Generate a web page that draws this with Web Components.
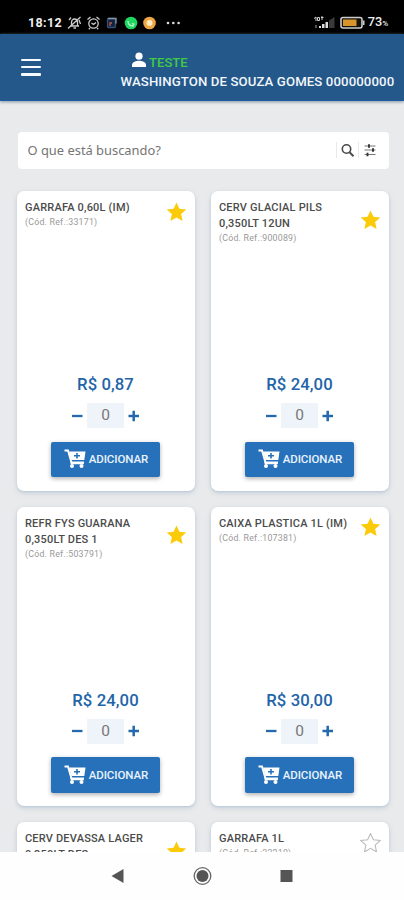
<!DOCTYPE html>
<html lang="pt-BR">
<head>
<meta charset="utf-8">
<title>Catálogo</title>
<style>
html,body{margin:0;height:100%;overflow:hidden;background:#e9eaeb;font-family:Roboto,"Liberation Sans",sans-serif}
</style>
</head>
<body>
<store-app></store-app>
<script>
const define = (name, html) => customElements.define(name, class extends HTMLElement {
  connectedCallback() {
    if (this.shadowRoot) return;
    const root = this.attachShadow({ mode: 'open' });
    root.innerHTML = typeof html === 'function' ? html(this) : html;
  }
});

define('status-bar', `
<style>
:host{display:flex;height:34px;box-sizing:border-box;background:#000;color:#eee;align-items:center;padding:11px 16px 0 28px;font:700 13px/22px Roboto,sans-serif}
.time{width:34px;font-size:12.5px;letter-spacing:.35px;white-space:nowrap}
svg{display:block;flex:none}
.icons{display:flex;align-items:center;margin-left:5px}
.right{display:flex;align-items:center;margin-left:auto}
.pct{font-size:12.8px;font-weight:500;margin-left:2px;letter-spacing:-.1px}
.pct small{font-size:8px}
</style>
<span class="time">18:12</span>
<div class="icons">
<svg width="116" height="16" viewBox="0 0 116 16" fill="none" stroke="#ccc" stroke-width="1.3">
 <path d="M3 11h9M4.500 10.500V7a3 3 0 0 1 6 0v3.500M6.500 13h2.500M1 13.500L13.500 2M2 5l2-2.500M12 5l1.500 4"/>
 <circle cx="26.500" cy="8.500" r="4.700"/><path d="M20.500 4.500l3-2.500M29.500 2l3 2.500M24.500 8l2 1.500 2.500-2M23 13l-1.200 1.200M30 13l1.200 1.200"/>
 <rect x="40.500" y="3.500" width="8" height="9" rx="1" fill="#16213a" stroke="#34527e"/><path d="M41 3.500h8v5" stroke="#8199ad"/><path d="M43 11V8h2" stroke="#b85c4f"/>
 <circle cx="64" cy="8" r="6.300" fill="#1fd660" stroke="none"/><path d="M61 6c0 3 2 5 5 5l.8-1.800-1.800-.7" stroke="#baf5cc"/>
 <circle cx="82.500" cy="8" r="6.300" fill="#eda643" stroke="none"/><circle cx="82.500" cy="8" r="3" fill="#ffe9bf" stroke="none"/>
 <g fill="#ddd" stroke="none"><circle cx="101" cy="8" r="1.300"/><circle cx="106.300" cy="8" r="1.300"/><circle cx="111.600" cy="8" r="1.300"/></g>
</svg></div>
<div class="right">
<svg width="53" height="14" viewBox="0 0 53 14">
 <path d="M1 2.500l2-1.500v4M4.500 1.500h2v3h-2zM8 1.500h2.500M9 0v4" stroke="#ccc" fill="none"/>
 <path d="M2 9h2v3H2z" fill="#555"/><path d="M6 12V10h2v2zM9 12V8h2.500v4zM12.500 12V6H15v6z" fill="#ddd"/><path d="M16 12V4.500L21.500 1v11z" fill="#3a3a3a"/>
 <rect x="28" y="1.500" width="21" height="10.500" rx="2" fill="#15120c" stroke="#ccc" stroke-width="1.600"/><rect x="30" y="3.500" width="13.500" height="6.500" fill="#d9952b"/><path d="M50 4.500h1.500v4.500H50" fill="#ccc"/>
</svg>
<span class="pct">73<small>%</small></span></div>`);

define('app-header', `
<style>
:host{display:grid;grid-template-columns:120.500px 1fr;height:67px;box-sizing:border-box;background:#24588a;color:#f1f6fb;border-bottom:1px solid #1c5d9f;box-shadow:0 1px 3px #8595a5;position:relative}
.menu{display:flex;flex-direction:column;gap:5px;padding:24.800px 0 0 20.500px}
.menu i{width:20px;height:2.300px;border-radius:1px;background:#f7fbff}
.user{padding-top:19px}
.name{display:flex;height:19px;align-items:center;padding-left:10.500px;gap:2px;color:#3fca45;font:500 13.200px/19px Roboto,sans-serif;letter-spacing:-.05px}
.name svg{margin-top:-5px}
.full{font:500 13.200px/20px Roboto,sans-serif;white-space:nowrap;letter-spacing:.11px}
</style>
<div class="menu"><i></i><i></i><i></i></div>
<div class="user"><div class="name"><svg width="16" height="16" viewBox="0 0 16 16" fill="#fff"><circle cx="8" cy="4.200" r="3.600"/><path d="M1 15v-2c0-3 4.500-4.200 7-4.200s7 1.200 7 4.200v2z"/></svg><span>TESTE</span></div>
<div class="full">WASHINGTON DE SOUZA GOMES 000000000</div></div>`);

define('search-box', `
<style>
:host{display:flex;align-items:center;height:37px;background:#fff;border-radius:4px;box-sizing:border-box;padding:0 11px 0 10px;color:#757575;font:400 12.900px/18px "Noto Sans",sans-serif}
span{flex:1;white-space:nowrap;margin-top:-1px}
svg{margin-top:-1px}
</style>
<span>O que está buscando?</span>
<svg width="42" height="20" viewBox="0 0 42 20" fill="none" stroke="#4a4a4a">
<path d="M.5 2v16M22.500 2v16" stroke="#e9e9e9"/><circle cx="10.500" cy="9" r="4.200" stroke-width="1.600"/><path d="M13.500 12.200l4 4" stroke-width="2"/>
<path d="M28.500 6H39.500M28.500 10H39.500M28.500 14.500H39.500" stroke-width="1.200" stroke="#777"/><path d="M33 4.200v3.600M37 8.200v3.600M31.500 12.700v3.600" stroke="#333" stroke-width="1.900"/></svg>`);

define('fav-star', el => `
<style>:host{display:block;width:21px;height:20px}svg{display:block}</style>
<svg width="21" height="20" viewBox="0 0 21 20"><path d="M10.500 .5l2.900 6.300 6.900.7-5.200 4.600 1.500 6.900-6.100-3.600-6.100 3.600 1.500-6.900-5.200-4.600 6.900-.7z" ${el.hasAttribute('off') ? 'fill="#fff" stroke="#bbb" stroke-width="1.100"' : 'fill="#fbcb09"'}/></svg>`);

define('qty-stepper', `
<style>
:host{display:flex;justify-content:center;align-items:center;height:25px;gap:4px;margin-left:-1px}
svg{display:block}
b{width:36.500px;height:25px;background:#eff3fa;text-align:center;font:400 15.500px/25px Roboto,sans-serif;color:#777}
</style>
<svg width="11" height="12" viewBox="0 0 11 12"><path d="M0 6h10.500" stroke="#2468ad" stroke-width="2.300"/></svg><b>0</b>
<svg width="11" height="12" viewBox="0 0 11 12"><path d="M.5 6h10.500M5.700 .7v10.600" stroke="#2468ad" stroke-width="2.500"/></svg>`);

define('add-button', `
<style>
:host{display:flex;align-items:center;width:109px;height:35.500px;box-sizing:border-box;padding-left:12.500px;gap:3px;margin-left:-.5px;background:#2671b9;border-radius:2px;box-shadow:0 2px 4px #0003,0 1px 5px #0002;color:#eaf3fc;font:500 11.500px/16px Roboto,sans-serif}
span{white-space:nowrap;letter-spacing:-.1px}
</style>
<svg width="22" height="20" viewBox="0 0 22 20"><path d="M.5 1.500h3.500l3.700 12.700h12" fill="none" stroke="#fff" stroke-width="1.900"/><path d="M5 2.500h16.500l-1.200 8.500H7.500z" fill="#fff"/><path d="M6.500 13.500h13.500" stroke="#fff" stroke-width="2"/><circle cx="8" cy="17" r="2" fill="#fff"/><circle cx="17.500" cy="17" r="2" fill="#fff"/><path d="M10 6.700h6M13 3.900v5.600" stroke="#2671b9" stroke-width="1.600"/></svg>
<span>ADICIONAR</span>`);

define('product-card', el => `
<style>
:host{display:flex;flex-direction:column;height:299.500px;box-sizing:border-box;background:#fff;border-radius:7px;box-shadow:0 2px 5px #9db4c977,0 1px 2px #9db4c955;padding:9px 8px 13.500px}
.head{display:flex;justify-content:space-between;align-items:center}
.title{font:500 11px/16px Roboto,sans-serif;color:#4b4b4b;letter-spacing:.19px;white-space:pre}
.ref{font:400 8.800px/12px Roboto,sans-serif;color:#999;white-space:nowrap;letter-spacing:.22px}
fav-star{margin-top:-5px}
.buy{margin-top:auto;display:flex;flex-direction:column;align-items:center}
.price{font:500 16.700px/20px Roboto,sans-serif;color:#2264a8;margin:0 0 8px -1px;letter-spacing:.08px}
add-button{margin-top:13.500px}
</style>
<div class="head"><div><div class="title"><slot></slot></div>${el.hasAttribute('code') ? `<div class="ref">(Cód. Ref.:${el.getAttribute('code')})</div>` : ''}</div><fav-star ${el.hasAttribute('off') ? 'off' : ''}></fav-star></div>
${el.hasAttribute('price') ? `<div class="buy"><div class="price">${el.getAttribute('price')}</div><qty-stepper></qty-stepper><add-button></add-button></div>` : ''}`);

define('nav-bar', `
<style>
:host{display:flex;align-items:center;justify-content:center;height:48px;background:#fefefe;position:relative}
svg{display:block}
</style>
<svg width="184" height="22" viewBox="0 0 184 22"><path d="M1.500 11l12-7v14z" fill="#555"/><circle cx="92.500" cy="11" r="8.300" fill="none" stroke="#666" stroke-width="1.300"/><circle cx="92.500" cy="11" r="6" fill="#555"/><path d="M170.500 5h12v12h-12z" fill="#555"/></svg>`);

define('store-app', `
<style>
:host{display:flex;flex-direction:column;width:404px;height:900px;background:#e9eaeb;overflow:hidden}
main{flex:1;min-height:0;overflow:hidden;padding:31px 15.500px 0 17.500px}
.grid{display:grid;grid-template-columns:178px 178px;gap:16px;margin:22px 0 0 -.5px}
.grid .peek{padding-bottom:0;height:60px}
.grid .two{padding-bottom:0}
status-bar,app-header,nav-bar{flex:none}
</style>
<status-bar></status-bar><app-header></app-header>
<main><search-box></search-box>
<div class="grid">
<product-card code="33171" price="R$ 0,87">GARRAFA 0,60L (IM)</product-card>
<product-card code="900089" price="R$ 24,00">CERV GLACIAL PILS<br>0,350LT 12UN</product-card>
<product-card code="503791" price="R$ 24,00">REFR FYS GUARANA<br>0,350LT DES 1</product-card>
<product-card code="107381" price="R$ 30,00">CAIXA PLASTICA 1L (IM)</product-card>
<product-card class="peek" code="503792">CERV DEVASSA LAGER<br>0,350LT DES</product-card>
<product-card class="peek" code="33210" off>GARRAFA 1L</product-card>
</div></main><nav-bar></nav-bar>`);
</script>
</body>
</html>
